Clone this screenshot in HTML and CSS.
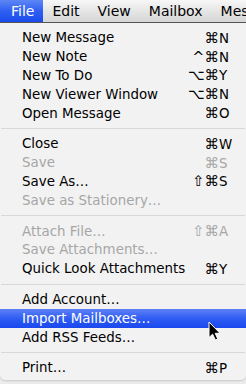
FILE: index.html
```html
<!DOCTYPE html>
<html>
<head>
<meta charset="utf-8">
<link rel="stylesheet" href="styles.css">
</head>
<body>
<div class="screen">
  <div class="menubar">
    <span class="mb-item active">File</span>
    <span class="mb-item">Edit</span>
    <span class="mb-item">View</span>
    <span class="mb-item">Mailbox</span>
    <span class="mb-item">Message</span>
  </div>
  <div class="menu">
    <div class="row"><span class="label">New Message</span><span class="sc"><span class="mod">⌘</span><span class="key">N</span></span></div>
    <div class="row"><span class="label">New Note</span><span class="sc"><span class="mod">^⌘</span><span class="key">N</span></span></div>
    <div class="row"><span class="label">New To Do</span><span class="sc"><span class="mod">⌥⌘</span><span class="key">Y</span></span></div>
    <div class="row"><span class="label">New Viewer Window</span><span class="sc"><span class="mod">⌥⌘</span><span class="key">N</span></span></div>
    <div class="row"><span class="label">Open Message</span><span class="sc"><span class="mod">⌘</span><span class="key">O</span></span></div>
    <div class="sep"></div>
    <div class="row"><span class="label">Close</span><span class="sc"><span class="mod">⌘</span><span class="key">W</span></span></div>
    <div class="row disabled"><span class="label">Save</span><span class="sc"><span class="mod">⌘</span><span class="key">S</span></span></div>
    <div class="row"><span class="label">Save As…</span><span class="sc"><span class="mod">⇧⌘</span><span class="key">S</span></span></div>
    <div class="row disabled"><span class="label">Save as Stationery…</span></div>
    <div class="sep"></div>
    <div class="row disabled"><span class="label">Attach File…</span><span class="sc"><span class="mod">⇧⌘</span><span class="key">A</span></span></div>
    <div class="row disabled"><span class="label">Save Attachments…</span></div>
    <div class="row"><span class="label">Quick Look Attachments</span><span class="sc"><span class="mod">⌘</span><span class="key">Y</span></span></div>
    <div class="sep"></div>
    <div class="row"><span class="label">Add Account…</span></div>
    <div class="row selected"><span class="label">Import Mailboxes…</span></div>
    <div class="row"><span class="label">Add RSS Feeds…</span></div>
    <div class="sep"></div>
    <div class="row"><span class="label">Print…</span><span class="sc"><span class="mod">⌘</span><span class="key">P</span></span></div>
  </div>
  <svg class="cursor" width="14" height="20" viewBox="0 0 14 20">
    <path d="M1 1 L1 16.5 L4.6 13.2 L7.4 19 L9.8 18 L7.2 12.3 L12 12.3 Z" fill="#000" stroke="#fff" stroke-width="1"/>
  </svg>
</div>
</body>
</html>
```

FILE: styles.css
```css
html, body {
  margin: 0;
  padding: 0;
  background: #e9e9e9;
}
.screen {
  position: relative;
  width: 246px;
  height: 384px;
  overflow: hidden;
  font-family: "DejaVu Sans", "Lucida Grande", sans-serif;
  background: #ececec;
}
.menubar {
  display: flex;
  height: 22px;
  background: linear-gradient(#f7f7f7, #e2e2e2 60%, #d6d6d6);
  border-bottom: 1px solid #555;
  white-space: nowrap;
  overflow: hidden;
  font-size: 14px;
  line-height: 22px;
  color: #000;
}
.mb-item {
  padding: 0 9px;
}
.mb-item:first-child {
  padding-left: 11px;
}
.mb-item.active {
  color: #fff;
  background: linear-gradient(#5f86f6, #2f5ff1 50%, #1a4bec);
}
.menu {
  background: #f2f2f2;
  padding: 5.5px 0 3px;
  border-radius: 0 0 5px 5px;
  box-shadow: 0 1px 2px rgba(0,0,0,0.15);
  font-size: 13.4px;
  color: #000;
}
.row {
  display: flex;
  align-items: center;
  height: 18.8px;
  padding: 0 14px 0 22px;
  white-space: nowrap;
}
.label {
  flex: 1;
}
.sc {
  display: flex;
  align-items: baseline;
}
.mod {
  text-align: right;
  font-size: 14.5px;
}
.key {
  width: 13px;
  text-align: left;
}
.disabled {
  color: #a6a6a6;
}
.selected {
  color: #fff;
  background: linear-gradient(#5b80f5, #2c5af2 55%, #1a48ee);
}
.sep {
  height: 12px;
  display: flex;
  align-items: center;
  padding: 0 1px;
}
.sep::after {
  content: "";
  flex: 1;
  height: 1px;
  background: #d8d8d8;
}
.cursor {
  position: absolute;
  left: 208px;
  top: 321px;
}
```
